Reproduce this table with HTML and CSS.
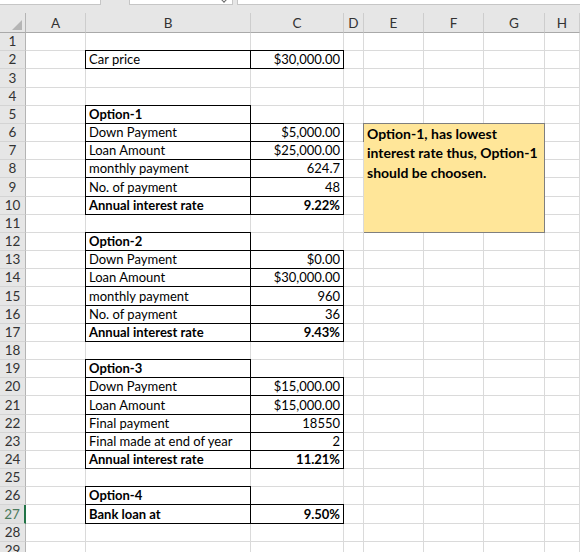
FILE: index.html
```html
<!DOCTYPE html>
<html>
<head>
<meta charset="utf-8">
<link rel="stylesheet" href="styles.css">
</head>
<body>
<div class="bar">
  <div class="box box1"></div>
  <div class="box box2"><span class="chev"></span></div>
  <div class="box box3"></div>
</div>
<div class="sheet">
  <div class="hd corner"><span class="tri"></span></div><div class="hd">A</div><div class="hd">B</div><div class="hd">C</div><div class="hd">D</div><div class="hd">E</div><div class="hd">F</div><div class="hd">G</div><div class="hd">H</div>

  <div class="n">1</div><div class="c"></div><div class="c"></div><div class="c"></div><div class="c"></div><div class="c"></div><div class="c"></div><div class="c"></div><div class="c"></div>
  <div class="n">2</div><div class="c"></div><div class="c b">Car price</div><div class="c b r">$30,000.00</div><div class="c"></div><div class="c"></div><div class="c"></div><div class="c"></div><div class="c"></div>
  <div class="n">3</div><div class="c"></div><div class="c"></div><div class="c"></div><div class="c"></div><div class="c"></div><div class="c"></div><div class="c"></div><div class="c"></div>
  <div class="n">4</div><div class="c"></div><div class="c"></div><div class="c"></div><div class="c"></div><div class="c"></div><div class="c"></div><div class="c"></div><div class="c"></div>
  <div class="n">5</div><div class="c"></div><div class="c b bold">Option-1</div><div class="c"></div><div class="c"></div><div class="c"></div><div class="c"></div><div class="c"></div><div class="c"></div>
  <div class="n">6</div><div class="c"></div><div class="c b">Down Payment</div><div class="c b r">$5,000.00</div><div class="c"></div><div class="note">Option-1, has lowest<br>interest rate thus, Option-1<br>should be choosen.</div><div class="c"></div>
  <div class="n">7</div><div class="c"></div><div class="c b">Loan Amount</div><div class="c b r">$25,000.00</div><div class="c"></div><div class="c"></div>
  <div class="n">8</div><div class="c"></div><div class="c b">monthly payment</div><div class="c b r">624.7</div><div class="c"></div><div class="c"></div>
  <div class="n">9</div><div class="c"></div><div class="c b">No. of payment</div><div class="c b r">48</div><div class="c"></div><div class="c"></div>
  <div class="n">10</div><div class="c"></div><div class="c b bold">Annual interest rate</div><div class="c b r bold">9.22%</div><div class="c"></div><div class="c"></div>
  <div class="n">11</div><div class="c"></div><div class="c"></div><div class="c"></div><div class="c"></div><div class="c"></div>
  <div class="n">12</div><div class="c"></div><div class="c b bold">Option-2</div><div class="c"></div><div class="c"></div><div class="c"></div><div class="c"></div><div class="c"></div><div class="c"></div>
  <div class="n">13</div><div class="c"></div><div class="c b">Down Payment</div><div class="c b r">$0.00</div><div class="c"></div><div class="c"></div><div class="c"></div><div class="c"></div><div class="c"></div>
  <div class="n">14</div><div class="c"></div><div class="c b">Loan Amount</div><div class="c b r">$30,000.00</div><div class="c"></div><div class="c"></div><div class="c"></div><div class="c"></div><div class="c"></div>
  <div class="n">15</div><div class="c"></div><div class="c b">monthly payment</div><div class="c b r">960</div><div class="c"></div><div class="c"></div><div class="c"></div><div class="c"></div><div class="c"></div>
  <div class="n">16</div><div class="c"></div><div class="c b">No. of payment</div><div class="c b r">36</div><div class="c"></div><div class="c"></div><div class="c"></div><div class="c"></div><div class="c"></div>
  <div class="n">17</div><div class="c"></div><div class="c b bold">Annual interest rate</div><div class="c b r bold">9.43%</div><div class="c"></div><div class="c"></div><div class="c"></div><div class="c"></div><div class="c"></div>
  <div class="n">18</div><div class="c"></div><div class="c"></div><div class="c"></div><div class="c"></div><div class="c"></div><div class="c"></div><div class="c"></div><div class="c"></div>
  <div class="n">19</div><div class="c"></div><div class="c b bold">Option-3</div><div class="c"></div><div class="c"></div><div class="c"></div><div class="c"></div><div class="c"></div><div class="c"></div>
  <div class="n">20</div><div class="c"></div><div class="c b">Down Payment</div><div class="c b r">$15,000.00</div><div class="c"></div><div class="c"></div><div class="c"></div><div class="c"></div><div class="c"></div>
  <div class="n">21</div><div class="c"></div><div class="c b">Loan Amount</div><div class="c b r">$15,000.00</div><div class="c"></div><div class="c"></div><div class="c"></div><div class="c"></div><div class="c"></div>
  <div class="n">22</div><div class="c"></div><div class="c b">Final payment</div><div class="c b r">18550</div><div class="c"></div><div class="c"></div><div class="c"></div><div class="c"></div><div class="c"></div>
  <div class="n">23</div><div class="c"></div><div class="c b">Final made at end of year</div><div class="c b r">2</div><div class="c"></div><div class="c"></div><div class="c"></div><div class="c"></div><div class="c"></div>
  <div class="n">24</div><div class="c"></div><div class="c b bold">Annual interest rate</div><div class="c b r bold">11.21%</div><div class="c"></div><div class="c"></div><div class="c"></div><div class="c"></div><div class="c"></div>
  <div class="n">25</div><div class="c"></div><div class="c"></div><div class="c"></div><div class="c"></div><div class="c"></div><div class="c"></div><div class="c"></div><div class="c"></div>
  <div class="n">26</div><div class="c"></div><div class="c b bold">Option-4</div><div class="c"></div><div class="c"></div><div class="c"></div><div class="c"></div><div class="c"></div><div class="c"></div>
  <div class="n act">27</div><div class="c"></div><div class="c b bold">Bank loan at</div><div class="c b r bold">9.50%</div><div class="c"></div><div class="c"></div><div class="c"></div><div class="c"></div><div class="c"></div>
  <div class="n">28</div><div class="c"></div><div class="c"></div><div class="c"></div><div class="c"></div><div class="c"></div><div class="c"></div><div class="c"></div><div class="c"></div>
  <div class="n">29</div><div class="c"></div><div class="c"></div><div class="c"></div><div class="c"></div><div class="c"></div><div class="c"></div><div class="c"></div><div class="c"></div>
</div>
</body>
</html>
```
FILE: styles.css
```css
* { box-sizing: border-box; }
html, body { margin: 0; padding: 0; background: #fff; }
body {
  font-family: Lato, "Liberation Sans", sans-serif;
  color: #000;
  width: 580px;
  height: 552px;
  overflow: hidden;
}
.bar {
  height: 13px;
  background: #e6e6e6;
  display: flex;
  align-items: flex-start;
}
.box {
  height: 5px;
  background: #fff;
  border: 1px solid #c6c6c6;
  border-top: none;
  position: relative;
}
.box1 { width: 101px; border-left: none; }
.box2 { width: 104px; margin-left: 28px; }
.box3 { flex: 1; margin-left: 4px; border-right: none; }
.chev {
  position: absolute;
  right: 6px;
  top: -2px;
  width: 4px;
  height: 4px;
  border-right: 1px solid #666;
  border-bottom: 1px solid #666;
  transform: rotate(45deg);
}
.sheet {
  display: grid;
  grid-template-columns: 26px 60px 165px 93px 20px 60px 60px 61px 1fr;
  grid-template-rows: 20px;
  grid-auto-rows: 18.18px;
}
.hd {
  background: #e6e6e6;
  border-right: 1px solid #cdcdcd;
  border-bottom: 1px solid #a9a9a9;
  display: flex;
  align-items: center;
  justify-content: center;
  color: #333;
  font-size: 13.5px;
  padding-top: 1px;
}
.corner { border-right-color: #b4b4b4; position: relative; }
.tri {
  position: absolute;
  right: 3px;
  bottom: 2px;
  width: 0;
  height: 0;
  border-left: 10px solid transparent;
  border-bottom: 10px solid #b5b5b5;
}
.n {
  background: #e6e6e6;
  border-right: 1px solid #b4b4b4;
  border-bottom: 1px solid #d4d4d4;
  color: #333;
  font-size: 13.5px;
  display: flex;
  align-items: flex-end;
  justify-content: center;
  padding-bottom: 1px;
  line-height: 15px;
}
.n.act {
  color: #4a7a5c;
  border-right: 2px solid #217346;
  background: #e1e1e1;
}
.c {
  border-right: 1px solid #dadada;
  border-bottom: 1px solid #dadada;
  display: flex;
  align-items: flex-end;
  padding: 0 3px 1px 3px;
  font-size: 13px;
  line-height: 15px;
  white-space: nowrap;
  overflow: hidden;
}
.b {
  border: 1px solid #000;
  margin: -1px 0 0 -1px;
}
.r { justify-content: flex-end; }
.bold { font-weight: 700; }
.note {
  grid-column: 6 / 9;
  grid-row: 7 / 13;
  margin: -1px 0 0 -1px;
  background: #ffe699;
  border: 1px solid #7f7f7f;
  font-weight: 700;
  font-size: 14px;
  line-height: 19.5px;
  padding: 0 3px;
  white-space: nowrap;
}
```
